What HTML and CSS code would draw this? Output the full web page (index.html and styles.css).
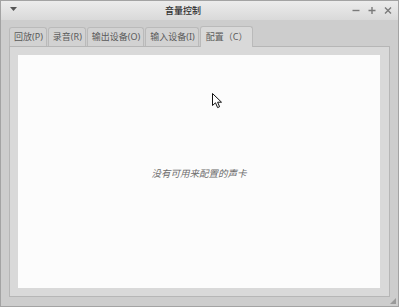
FILE: index.html
```html
<!DOCTYPE html>
<html>
<head>
<meta charset="utf-8">
<link rel="stylesheet" href="styles.css">
</head>
<body>
<div class="window">
  <div class="titlebar">
    <div class="menu-btn"><svg width="7" height="4" viewBox="0 0 7 4"><path d="M0 0H7L3.5 4Z" fill="#555"/></svg></div>
    <div class="title">音量控制</div>
    <div class="controls">
      <svg class="ctl" width="8" height="8" viewBox="0 0 8 8"><path d="M0.5 4.5H7.5" stroke="#7a7a7a" stroke-width="1.4"/></svg>
      <svg class="ctl" width="8" height="8" viewBox="0 0 8 8"><path d="M0.5 4.5H7.5M4 1V8" stroke="#7a7a7a" stroke-width="1.4"/></svg>
      <svg class="ctl" width="8" height="8" viewBox="0 0 8 8"><path d="M1 1.5L7 7.5M7 1.5L1 7.5" stroke="#7a7a7a" stroke-width="1.4"/></svg>
    </div>
  </div>
  <div class="body">
    <div class="tabs">
      <div class="tab">回放(P)</div>
      <div class="tab">录音(R)</div>
      <div class="tab">输出设备(O)</div>
      <div class="tab">输入设备(I)</div>
      <div class="tab active">配置（C）</div>
    </div>
    <div class="frame">
      <div class="content">
        <span class="empty">没有可用来配置的声卡</span>
      </div>
    </div>
  </div>
  <svg class="grip" width="6" height="6" viewBox="0 0 6 6"><path d="M6 0V6H0Z" fill="#9a9a9a"/></svg>
  <svg class="cursor" width="11" height="16" viewBox="0 0 11 16"><path d="M0.5 0.5V12.5L3.5 9.8L5.6 14.6L7.6 13.7L5.6 9.2H9.5Z" fill="#fff" stroke="#111" stroke-width="1" stroke-linejoin="round"/></svg>
</div>
</body>
</html>
```
FILE: styles.css
```css
html, body {
  margin: 0;
  padding: 0;
}
body {
  width: 399px;
  height: 307px;
  overflow: hidden;
  font-family: "Noto Sans", "Noto Sans CJK SC", sans-serif;
}
.window {
  position: relative;
  box-sizing: border-box;
  width: 399px;
  height: 307px;
  border: 1px solid #a3a3a3;
  background: #cdcdcd;
  display: flex;
  flex-direction: column;
}
.titlebar {
  height: 19px;
  background: linear-gradient(#ececec, #d9d9d9);
  display: flex;
  align-items: center;
  padding: 0 6px 0 9px;
}
.menu-btn {
  width: 16px;
  display: flex;
  align-items: center;
  padding-bottom: 3px;
}
.title {
  flex: 1;
  text-align: center;
  font-size: 9px;
  font-weight: 500;
  color: #2e2e2e;
  padding-right: 12px;
  line-height: 19px;
}
.controls {
  display: flex;
  gap: 8px;
  align-items: center;
  padding-bottom: 2px;
}
.ctl {
  display: block;
}
.body {
  flex: 1;
  display: flex;
  flex-direction: column;
  padding: 6px 8px 9px 8px;
}
.tabs {
  display: flex;
  gap: 1px;
  height: 20px;
  align-items: flex-end;
}
.tab {
  box-sizing: border-box;
  height: 19px;
  padding: 0 3px 0 4px;
  border: 1px solid #bababa;
  border-bottom: none;
  border-radius: 3px 3px 0 0;
  background: #d2d2d2;
  color: #5a5a5a;
  font-size: 9px;
  line-height: 18px;
  white-space: nowrap;
}
.tab.active {
  height: 21px;
  margin-bottom: -1px;
  background: #d9d9d9;
  position: relative;
  z-index: 1;
  line-height: 19px;
  padding: 0 5px;
}
.frame {
  flex: 1;
  border: 1px solid #b6b6b6;
  background: #d9d9d9;
  padding: 8px 9px 8px 8px;
  display: flex;
}
.content {
  flex: 1;
  background: #fcfcfc;
  display: flex;
  align-items: center;
  justify-content: center;
}
.empty {
  font-style: italic;
  font-size: 9.5px;
  color: #6b6b6b;
  margin-top: 3px;
}
.grip {
  position: absolute;
  right: 2px;
  bottom: 2px;
}
.cursor {
  position: absolute;
  left: 211px;
  top: 92px;
}
```
